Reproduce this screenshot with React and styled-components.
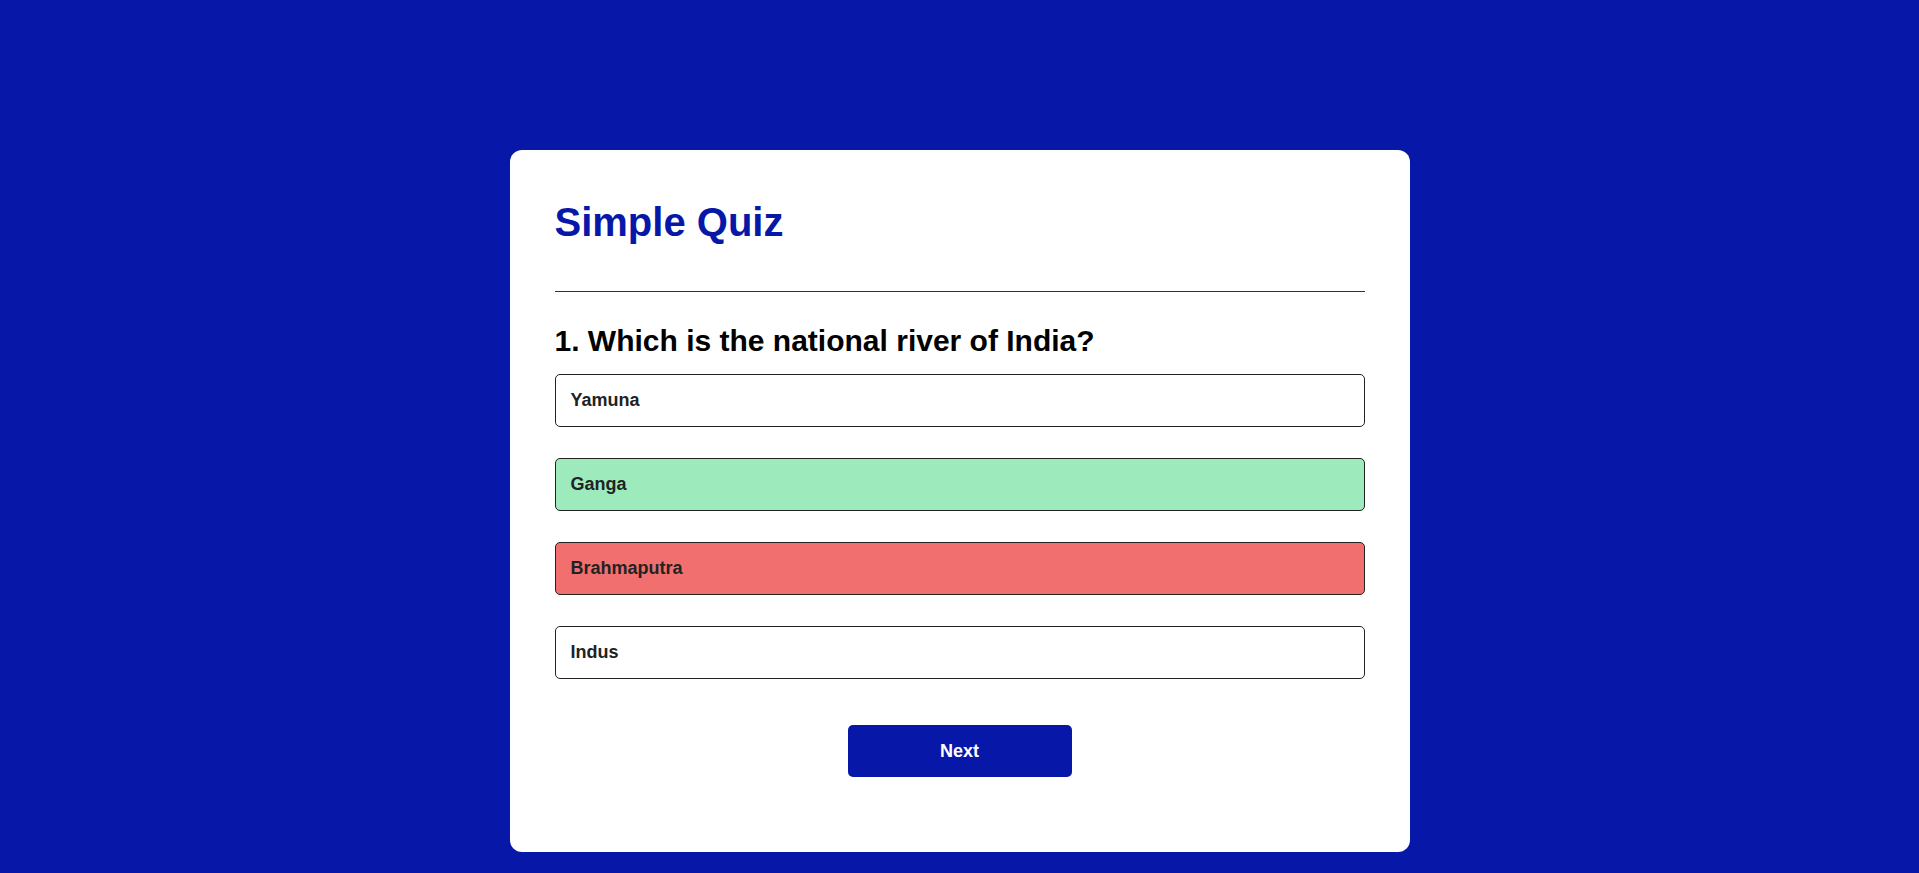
import React from "react";
import styled, { createGlobalStyle } from "styled-components";

const GlobalStyle = createGlobalStyle`
  * {
    box-sizing: border-box;
  }
  body {
    margin: 0;
    background: #0718a9;
    font-family: "Liberation Sans", Arial, sans-serif;
  }
`;

const answers = [
  { text: "Yamuna", state: "idle" },
  { text: "Ganga", state: "correct" },
  { text: "Brahmaputra", state: "incorrect" },
  { text: "Indus", state: "idle" },
];

export default function App() {
  return (
    <>
      <GlobalStyle />
      <Card>
        <Title>Simple Quiz</Title>
        <Quiz>
          <Question>1. Which is the national river of India?</Question>
          <Answers>
            {answers.map((a) => (
              <AnswerButton key={a.text} $state={a.state}>
                {a.text}
              </AnswerButton>
            ))}
          </Answers>
          <NextButton>Next</NextButton>
        </Quiz>
      </Card>
    </>
  );
}

const bgFor = {
  idle: "#ffffff",
  correct: "#9deabd",
  incorrect: "#f26f6f",
};

const Card = styled.div`
  width: 900px;
  margin: 150px auto 0;
  padding: 45px;
  background: #ffffff;
  border-radius: 12px;
`;

const Title = styled.h1`
  margin: 0;
  padding-bottom: 42px;
  border-bottom: 1px solid #333;
  color: #0718a9;
  font-size: 40px;
  font-weight: 700;
  line-height: 54px;
`;

const Quiz = styled.div`
  padding-top: 32px;
  display: flex;
  flex-direction: column;
`;

const Question = styled.h2`
  margin: 0;
  color: #000;
  font-size: 30px;
  font-weight: 700;
  line-height: 34px;
`;

const Answers = styled.div`
  margin-top: 16px;
  display: flex;
  flex-direction: column;
  gap: 31px;
`;

const AnswerButton = styled.button`
  display: block;
  width: 100%;
  padding: 15px 15px;
  border: 1px solid #222;
  border-radius: 5px;
  background: ${(p) => bgFor[p.$state]};
  color: #222;
  font-family: inherit;
  font-size: 18px;
  font-weight: 700;
  line-height: 21px;
  text-align: left;
  cursor: pointer;
`;

const NextButton = styled.button`
  align-self: center;
  width: 224px;
  height: 52px;
  margin: 46px 0 30px;
  border: 0;
  border-radius: 5px;
  background: #0718a9;
  color: #fff;
  font-family: inherit;
  font-size: 18px;
  font-weight: 700;
  cursor: pointer;
`;
